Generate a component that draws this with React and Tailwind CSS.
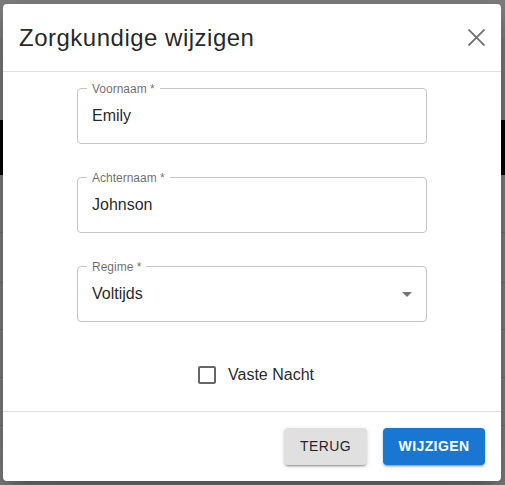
import React, { useState } from 'react';

const font = { fontFamily: '"Liberation Sans", Arial, sans-serif' };

function OutlinedField({ label, children, right }) {
  return (
    <div className="relative h-[56px] w-[350px] rounded-[4px] border border-[#c4c4c4] flex items-center pl-[14px] pr-[7px]">
      <span className="absolute -top-[8px] left-[9px] bg-white px-[5px] text-[12px] leading-[16px] text-black/60">
        {label}
      </span>
      <span className="flex-1 text-[16px] text-black/[0.87]">{children}</span>
      {right}
    </div>
  );
}

function BackgroundPage() {
  return (
    <div className="h-[485px] w-[505px] bg-white">
      <div className="h-[38px] bg-white" />
      <div className="h-[82px] bg-[#f7f7f7] flex items-center px-1">
        <span className="text-[20px] text-[#b06000]">C</span>
      </div>
      <div className="h-[55px] bg-black" />
      <div className="h-[58px] border-b border-[#e0e0e0]" />
      <div className="h-[50px] border-b border-[#e0e0e0]" />
      <div className="h-[47px] border-b border-[#e0e0e0]" />
      <div className="h-[48px] border-b border-[#e0e0e0]" />
      <div className="h-[48px] border-b border-[#e0e0e0]" />
      <div className="flex items-center h-[20px] px-1 text-[16px] text-black/[0.87]">
        <span className="w-[206px]">Rodriguez</span>
        <span className="w-[210px]">Voltijds</span>
        <span className="h-[30px] w-[30px] rounded-full bg-[#d32f2f]" />
      </div>
    </div>
  );
}

export default function App() {
  const [nacht, setNacht] = useState(false);

  return (
    <div className="relative h-[485px] w-[505px] overflow-hidden" style={font}>
      <BackgroundPage />
      <div className="absolute inset-0 bg-black/50" />

      <div className="absolute left-[3px] top-[4px] flex h-[477px] w-[498px] flex-col rounded-[4px] bg-white shadow-[0_11px_15px_-7px_rgba(0,0,0,0.2),0_24px_38px_3px_rgba(0,0,0,0.14),0_9px_46px_8px_rgba(0,0,0,0.12)]">
        {/* header */}
        <div className="flex h-[68px] items-center justify-between border-b border-[#e0e0e0] pl-[16px] pr-[16px]">
          <h2 className="text-[24px] font-normal leading-none tracking-[0.5px] text-black/[0.87]">Zorgkundige wijzigen</h2>
          <button className="text-[#707070]" title="Sluiten">
            <svg viewBox="0 0 17 17" width="17" height="17" stroke="currentColor" strokeWidth="1.8" fill="none">
              <path d="M0.5 0.5L16.5 16.5M16.5 0.5L0.5 16.5" />
            </svg>
          </button>
        </div>

        {/* content */}
        <div className="flex flex-1 flex-col items-center pt-[16px]">
          <div className="flex flex-col gap-[33px]">
            <OutlinedField label="Voornaam *">Emily</OutlinedField>
            <OutlinedField label="Achternaam *">Johnson</OutlinedField>
            <OutlinedField
              label="Regime *"
              right={
                <svg viewBox="0 0 24 24" width="24" height="24" fill="currentColor" className="text-black/[0.54]">
                  <path d="M7 10l5 5 5-5z" />
                </svg>
              }
            >
              Voltijds
            </OutlinedField>
          </div>

          <label className="mt-[41px] flex cursor-pointer items-center gap-[9px] pl-[5px]">
            <span className="text-black/[0.6]" onClick={() => setNacht(!nacht)}>
              <svg viewBox="0 0 24 24" width="24" height="24" fill="currentColor">
                <path d="M19 5v14H5V5h14m0-2H5c-1.11 0-2 .9-2 2v14c0 1.1.89 2 2 2h14c1.1 0 2-.9 2-2V5c0-1.1-.9-2-2-2z" />
              </svg>
            </span>
            <span className="text-[16px] text-black/[0.87]">Vaste Nacht</span>
          </label>
        </div>

        {/* footer */}
        <div className="flex h-[70px] items-center justify-end gap-[16px] border-t border-[#e0e0e0] pr-[16px]">
          <button className="h-[37px] w-[83px] rounded-[4px] bg-[#e0e0e0] text-[14px] font-medium uppercase tracking-[0.4px] text-black/[0.87] shadow-[0_3px_1px_-2px_rgba(0,0,0,0.2),0_2px_2px_0_rgba(0,0,0,0.14),0_1px_5px_0_rgba(0,0,0,0.12)]">
            Terug
          </button>
          <button className="h-[37px] w-[102px] rounded-[4px] bg-[#1976d2] text-[14px] font-bold uppercase tracking-[0.4px] text-white shadow-[0_3px_1px_-2px_rgba(0,0,0,0.2),0_2px_2px_0_rgba(0,0,0,0.14),0_1px_5px_0_rgba(0,0,0,0.12)]">
            Wijzigen
          </button>
        </div>
      </div>
    </div>
  );
}
